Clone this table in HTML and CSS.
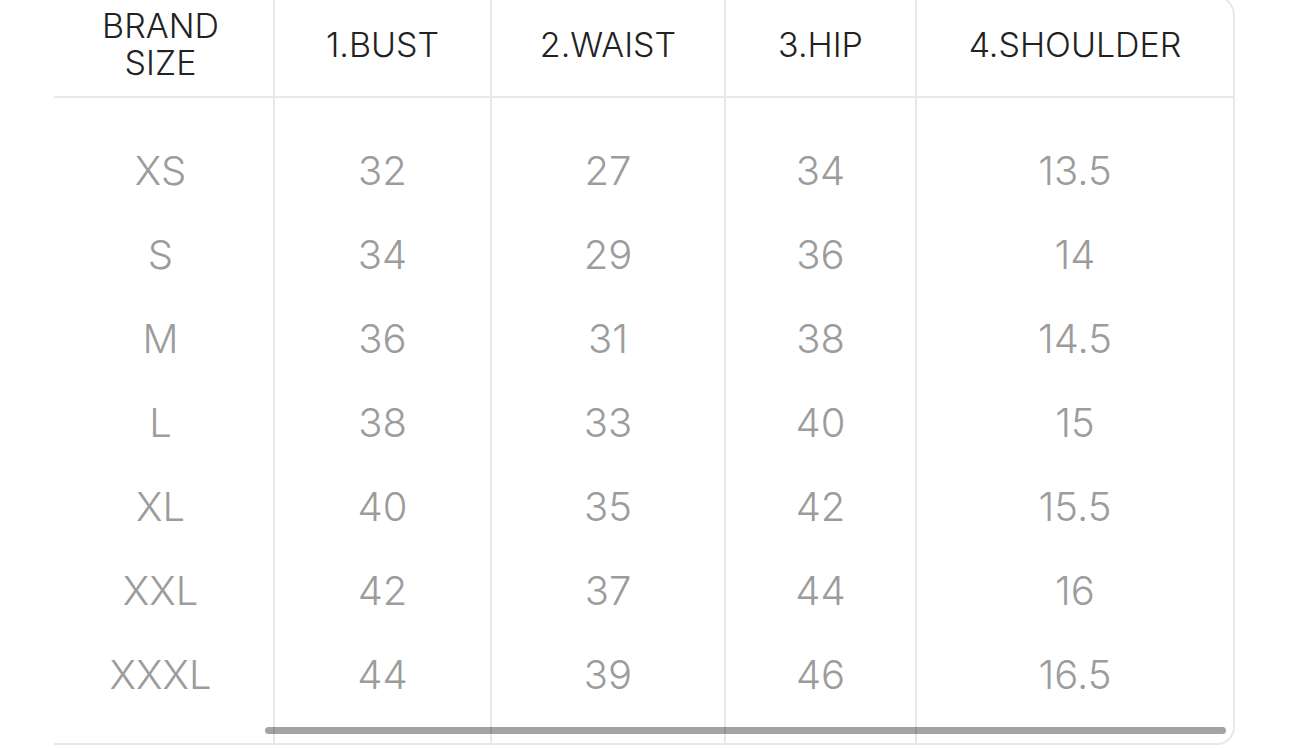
FILE: index.html
```html
<!DOCTYPE html>
<html lang="en">
<head>
<meta charset="utf-8">
<title>Size chart</title>
<link rel="stylesheet" href="styles.css">
</head>
<body>
<div class="sheet">
  <table class="chart">
    <thead>
      <tr>
        <th class="c1"><span class="brand">BRAND<br>SIZE</span></th>
        <th class="c2">1.BUST</th>
        <th class="c3">2.WAIST</th>
        <th class="c4">3.HIP</th>
        <th class="c5">4.SHOULDER</th>
      </tr>
    </thead>
    <tbody>
      <tr class="first"><td class="c1">XS</td><td class="c2">32</td><td class="c3">27</td><td class="c4">34</td><td class="c5">13.5</td></tr>
      <tr><td class="c1">S</td><td class="c2">34</td><td class="c3">29</td><td class="c4">36</td><td class="c5">14</td></tr>
      <tr><td class="c1">M</td><td class="c2">36</td><td class="c3">31</td><td class="c4">38</td><td class="c5">14.5</td></tr>
      <tr><td class="c1">L</td><td class="c2">38</td><td class="c3">33</td><td class="c4">40</td><td class="c5">15</td></tr>
      <tr><td class="c1">XL</td><td class="c2">40</td><td class="c3">35</td><td class="c4">42</td><td class="c5">15.5</td></tr>
      <tr><td class="c1">XXL</td><td class="c2">42</td><td class="c3">37</td><td class="c4">44</td><td class="c5">16</td></tr>
      <tr class="last"><td class="c1">XXXL</td><td class="c2">44</td><td class="c3">39</td><td class="c4">46</td><td class="c5">16.5</td></tr>
    </tbody>
  </table>
  <div class="thumb"></div>
</div>
</body>
</html>
```

FILE: styles.css
```css
html, body {
  margin: 0;
  padding: 0;
  background: #ffffff;
  overflow: hidden;
}

body {
  font-family: Inter, "Noto Sans", sans-serif;
  width: 1290px;
  height: 748px;
}

.sheet {
  position: relative;
  width: 1181px;
  margin-left: 54px;
  margin-top: -6px;
  box-sizing: border-box;
  border-top: 2px solid #e8e8e8;
  border-right: 2px solid #e8e8e8;
  border-bottom: 2px solid #e8e8e8;
  border-radius: 0 22px 18px 0;
}

.chart {
  width: 100%;
  table-layout: fixed;
  border-collapse: separate;
  border-spacing: 0;
}

.chart th,
.chart td {
  box-sizing: border-box;
  padding: 0;
  text-align: center;
  border-right: 2px solid #e8e8e8;
}

.chart .c5 { border-right: none; width: 316px; }
.chart .c1 { width: 221px; padding-right: 6px; }
.chart .c2 { width: 217px; }
.chart .c3 { width: 234px; }
.chart .c4 { width: 191px; }

.chart th {
  height: 102px;
  padding-bottom: 3px;
  border-bottom: 2px solid #e8e8e8;
  font-weight: 300;
  font-size: 34px;
  line-height: 40px;
  color: #222222;
}

.brand {
  display: inline-block;
  line-height: 37px;
}

.chart td {
  height: 84px;
  font-size: 40px;
  font-weight: 300;
  color: #9c9c9c;
}

.chart tr.first td {
  height: 114px;
  padding-top: 30px;
}

.chart tr.last td {
  height: 111px;
  padding-bottom: 27px;
}

.chart tr.first td.c1,
.chart tr.last td.c1 { padding-right: 6px; }

.thumb {
  position: absolute;
  left: 211px;
  right: 7px;
  bottom: 9px;
  height: 7px;
  border-radius: 4px;
  background: rgba(0, 0, 0, 0.36);
}
```
